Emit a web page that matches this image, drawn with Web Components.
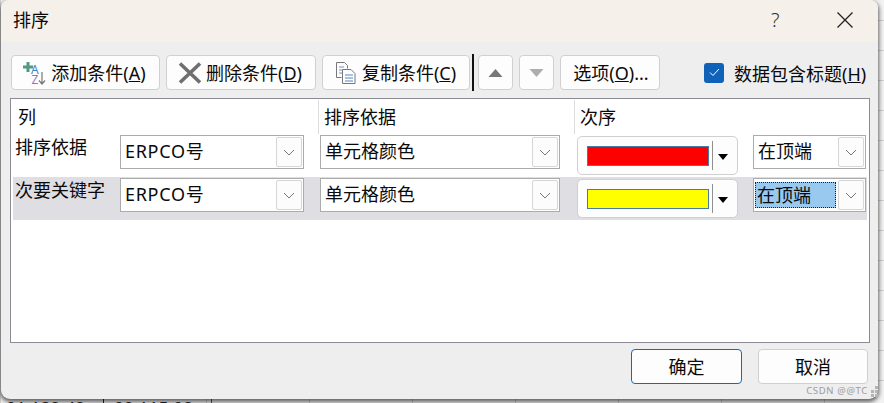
<!DOCTYPE html>
<html><head><meta charset="utf-8"><style>
html,body{margin:0;padding:0}
body{width:884px;height:403px;overflow:hidden;position:relative;background:#f4f4f4;font-family:"Noto Sans","Noto Sans CJK SC",sans-serif;font-size:18px;color:#0a0a0a}
</style></head><body>
<sort-dialog></sort-dialog>
<script>
function def(name,css,html){
  customElements.define(name,class extends HTMLElement{
    constructor(){super();const s=this.attachShadow({mode:'open'});s.innerHTML='<style>'+css+'</style>'+(typeof html==='function'?html(this):html);}
  });
}
const chevron='<svg width="12" height="7" viewBox="0 0 12 7"><path d="M1 1l5 5 5-5" fill="none" stroke="#777" stroke-width="1"/></svg>';
def('tool-button',`
:host{display:inline-flex;box-sizing:border-box;height:35px;align-items:center;justify-content:center;gap:6px;background:#fdfdfd;border:1px solid #d0d0d0;border-radius:4px;white-space:nowrap;font-size:18px;line-height:1}
`,'<slot name="icon"></slot><slot></slot>');
def('combo-box',`
:host{display:flex;box-sizing:border-box;height:34px;background:#fff;border:1px solid #ababab;align-items:stretch;font-size:18px;color:#0a0a0a}
.v{flex:1;display:flex;align-items:center;padding:0 0 5px 4px;min-width:0;white-space:nowrap}
.b{width:26px;box-sizing:border-box;margin:1px 1px 1px 0;border:1px solid #d6d6d6;border-radius:2px;background:#fcfcfc;display:flex;align-items:center;justify-content:center}
.s{flex:1;align-self:stretch;margin:3px 2px 3px 1px;background:#99c9ef;outline:1px dotted #222;outline-offset:-1px;display:flex;align-items:center;padding:0 0 3px 2px}
`,e=>e.hasAttribute('selected')
  ?`<div class="s"><slot></slot></div><div class="b">${chevron}</div>`
  :`<div class="v"><slot></slot></div><div class="b">${chevron}</div>`);
def('color-picker',`
:host{display:flex;box-sizing:border-box;width:161px;height:39px;background:#fdfdfd;border:1px solid #d0d0d0;border-radius:5px;align-items:center;padding:0 9px}
.sw{width:122px;height:20px;box-sizing:border-box;border:1px solid #4a7ba6;margin-top:1px}
.d{width:1px;height:29px;background:#8f8f8f;margin-left:3px}
.a{margin-left:5px;width:0;height:0;border-left:5.5px solid transparent;border-right:5.5px solid transparent;border-top:6px solid #000;margin-top:2px}
`,e=>`<div class="sw" style="background:${e.getAttribute('color')}"></div><div class="d"></div><div class="a"></div>`);
def('sort-row',`
:host{display:grid;grid-template-columns:107px 184px 16px 240px 17px 161px 15px 114px;height:43px;width:854px;box-sizing:border-box;align-items:start}
:host([active]){background:#dfdee3}
.l{white-space:nowrap;padding-left:2px;line-height:24px;margin-top:1px}
.c1,.c2,.c4{grid-row:1;margin-top:1px}
.c1{grid-column:2;letter-spacing:.7px}.c2{grid-column:4}.c3{grid-column:6;margin-top:2px}.c4{grid-column:8;margin-right:1px}
`,e=>{const a=e.getAttribute('order-selected')!==null;const k=e.getAttribute('by');const o=a?'<combo-box class="c4" selected>在顶端</combo-box>':'<combo-box class="c4">在顶端</combo-box>';
return `<div class="l">${e.getAttribute('label')}</div><combo-box class="c1">${e.getAttribute('col')}</combo-box><combo-box class="c2">${k}</combo-box><color-picker class="c3" color="${e.getAttribute('color')}"></color-picker>${o}`});
def('sort-table',`
:host{display:block;box-sizing:border-box;width:860px;height:245px;background:#fff;border:1px solid #8b8b93;padding:0 2px}
.h{display:grid;grid-template-columns:305px 256px 1fr;height:35px;box-sizing:border-box;padding-top:1px}
.h div{padding-left:5px;height:34px;line-height:34px;white-space:nowrap}
.h div+div{border-left:1px solid #dcdcdc;padding-left:5px}
`,`<div class="h"><div>列</div><div>排序依据</div><div>次序</div></div><slot></slot>`);
def('sort-dialog',`
:host{position:absolute;left:0;top:0;width:884px;height:403px;display:block;overflow:hidden;font-family:"Noto Sans","Noto Sans CJK SC",sans-serif;font-size:18px;color:#0a0a0a}
.bg{position:absolute;inset:0;background:#f2f2f2;
 background-image:linear-gradient(#d0d0d0 1px,transparent 1px),linear-gradient(90deg,#d0d0d0 1px,transparent 1px);background-size:100% 30px,103px 100%;background-position:0 20px,0 0}
.bt{position:absolute;left:6px;top:396px;font:17.5px "Noto Sans",sans-serif;color:#222;white-space:nowrap;display:flex;line-height:24px}
.bt span:first-child{width:97px;border-right:1px solid #222;margin-right:10px}
.green{position:absolute;left:211px;top:398px;width:1px;height:5px;background:#217346}
.win{position:absolute;left:1px;top:0;width:877px;height:398.500px;background:#eee;border-radius:8px 8px 9px 9px;box-shadow:0 2px 4px 1px rgba(0,0,0,.6);overflow:hidden;display:flex;flex-direction:column}
.title{height:42px;background:#f6f0ea;display:flex;align-items:center;padding-left:12px;box-sizing:border-box;flex:none}
.title .t{flex:1;margin-top:-4px}
.q{font-size:20px;font-weight:300;color:#333;width:66px;margin-top:-3px;font-family:"Noto Sans",sans-serif}
.x{width:16px;height:16px;margin-right:25px;margin-top:-3px}
.tools{display:flex;align-items:center;height:37px;margin:12px 0 0 10px;flex:none}
.sep{width:2px;height:37px;background:#111;margin:0 4px 0 2px}
.chk{width:20px;height:20px;border-radius:3px;background:#0f62b8;display:flex;align-items:center;justify-content:center;margin-left:44px}
.lbl{margin-left:10px;white-space:nowrap}
sort-table{margin:7px 0 0 9px;flex:none}
.foot{display:flex;justify-content:flex-end;margin:6px 10px 0 0;gap:16px}
.foot tool-button{width:110px}
.foot .pri{width:111px;border-color:#0f6cbd}
.wm{position:absolute;right:6px;top:385px;height:12px;display:flex;align-items:center;gap:2px;font:9.500px/12px "Noto Sans",sans-serif;color:#9c9c9c;letter-spacing:.65px;white-space:nowrap}
`,`
<div class="bg"></div>
<div class="bt"><span>91 132 42</span><span>92 115 93</span></div>
<div class="green"></div>
<div class="win">
 <div class="title"><div class="t">排序</div><div class="q">?</div>
  <svg class="x" viewBox="0 0 16 16"><path d="M.5.5l15 15M15.500.5l-15 15" stroke="#222" stroke-width="1.300" fill="none"/></svg></div>
 <div class="tools">
  <tool-button style="width:149px;padding-right:3px"><svg slot="icon" width="24" height="26" viewBox="0 0 24 26" style="margin-right:-1px">
    <path d="M4.500 2h3v3.500H11v3H7.500V12h-3V8.500H1v-3h3.500z" fill="#4f9a80"/>
    <text x="9" y="14" font-family="Noto Sans" font-size="12" fill="#3f7fc4">A</text>
    <text x="9.500" y="24" font-family="Noto Sans" font-size="12" fill="#9a6fc4">Z</text>
    <path d="M20 12v12M17 20.500l3 3.500 3-3.500" stroke="#777" stroke-width="1.200" fill="none"/></svg><span>添加条件(<u>A</u>)</span></tool-button>
  <tool-button style="width:150px;margin-left:6px"><svg slot="icon" width="24" height="22" viewBox="0 0 24 22" style="margin-left:-2px;margin-right:-2px"><path d="M2 1.500l20 19M22 1.500l-20 19" stroke="#6f6f6f" stroke-width="3.600" fill="none"/></svg><span>删除条件(<u>D</u>)</span></tool-button>
  <tool-button style="width:148px;margin-left:6px"><svg slot="icon" width="20" height="22" viewBox="0 0 20 22"><path d="M.5.5h8l3 3v3M.5.500v15h5" fill="none" stroke="#777"/><path d="M3 5h5M3 8h3M3 11h3" stroke="#6d97c8"/><path d="M6.500 7.500h8.500l4 4v10H6.500z" fill="#fff" stroke="#777"/><path d="M9 13h8M9 16h8M9 19h8" stroke="#4d86c4"/></svg><span>复制条件(<u>C</u>)</span></tool-button>
  <div class="sep"></div>
  <tool-button style="width:35px"><svg width="15" height="8" viewBox="0 0 15 8"><path d="M7.500 0l7 8H.5z" fill="#777"/></svg></tool-button>
  <tool-button style="width:35px;margin-left:6px"><svg width="15" height="8" viewBox="0 0 15 8"><path d="M.5 0h14l-7 8z" fill="#adadad"/></svg></tool-button>
  <tool-button style="width:100px;margin-left:6px;padding-left:2px"><span>选项(<u>O</u>)...</span></tool-button>
  <div class="chk"><svg width="11" height="9" viewBox="0 0 11 9"><path d="M1 4.500l3 3L10 1" stroke="#fff" stroke-width="1" fill="none"/></svg></div>
  <div class="lbl">数据包含标题(<u>H</u>)</div>
 </div>
 <sort-table>
  <sort-row label="排序依据" col="ERPCO号" by="单元格颜色" color="#ff0000"></sort-row>
  <sort-row active order-selected label="次要关键字" col="ERPCO号" by="单元格颜色" color="#ffff00"></sort-row>
 </sort-table>
 <div class="foot"><tool-button class="pri">确定</tool-button><tool-button>取消</tool-button></div>
</div>
<div class="wm"><span>CSDN @@TC</span><svg width="8" height="11" viewBox="0 0 8 11" fill="#b4b4b4"><rect x="5" y="0" width="3" height="3"/><rect x="1" y="4" width="3" height="3"/><rect x="5" y="4" width="3" height="3"/><rect x="1" y="8" width="3" height="3"/><rect x="5" y="8" width="3" height="3"/></svg></div>`);
</script>
</body></html>
